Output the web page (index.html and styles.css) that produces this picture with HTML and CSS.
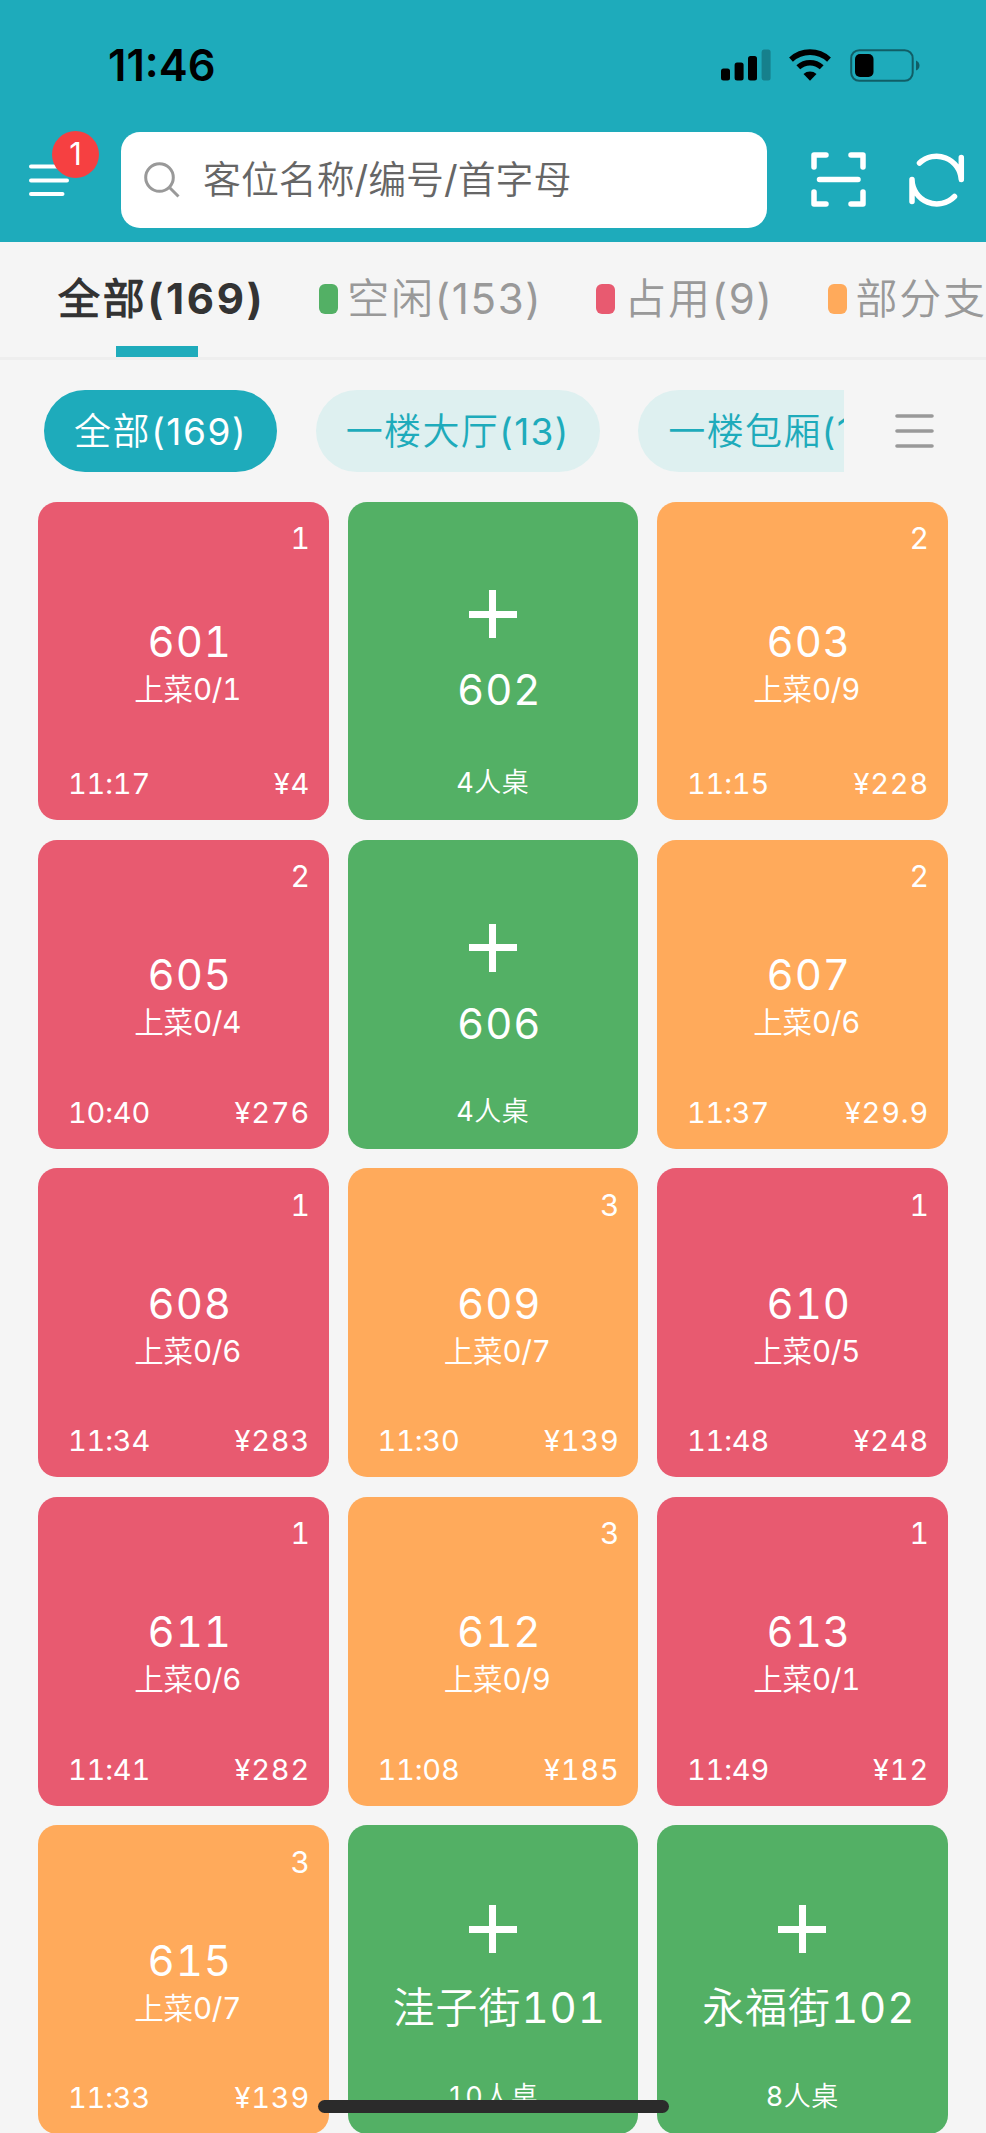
FILE: index.html
```html
<!DOCTYPE html>
<html lang="zh-CN">
<head>
<meta charset="UTF-8" />
<meta name="viewport" content="width=device-width, initial-scale=1" />
<title>客位</title>
<link rel="stylesheet" href="styles.css">
</head>
<body>
<header class="header">
    <div class="status-bar">
        <span class="clock">11:46</span>
        <svg class="status-icons" width="200" height="34" viewBox="0 0 200 34">
            <rect x="0" y="19.5" width="9" height="12" rx="2.5"/>
            <rect x="13.6" y="13.5" width="9" height="18" rx="2.5"/>
            <rect x="27" y="7" width="9" height="24.5" rx="2.5"/>
            <rect x="40.6" y="0.5" width="9" height="31" rx="2.5" opacity="0.25"/>
            <g fill="none" stroke="#000" stroke-width="5.6">
                <path d="M70 10.6a28 28 0 0 1 38 0"/>
                <path d="M77.3 18.3a17.2 17.2 0 0 1 23.4 0"/>
            </g>
            <path d="M82.5 25a10 10 0 0 1 13 0L89 31.8z"/>
            <rect x="130.2" y="1.2" width="61.5" height="30.6" rx="8" fill="none" stroke="#000" stroke-width="2" opacity="0.45"/>
            <rect x="134" y="5" width="18.5" height="23" rx="5"/>
            <path d="M195 11.5q3.5 1.5 3.5 5t-3.5 5z" opacity="0.45"/>
        </svg>
    </div>
    <div class="toolbar">
        <button class="menu-btn" aria-label="菜单">
            <svg width="42" height="34" viewBox="0 0 42 34" fill="none" stroke="#fff" stroke-width="4" stroke-linecap="round">
                <path d="M2 3.5h36M2 17.5h36M2 31h31.500"/>
            </svg>
            <span class="badge">1</span>
        </button>
        <div class="search">
            <svg width="36" height="36" viewBox="0 0 36 36" fill="none" stroke="#999" stroke-width="3">
                <circle cx="15.500" cy="15.500" r="13.8"/>
                <path d="M25.500 25.500l9 9"/>
            </svg>
            <span>客位名称/编号/首字母</span>
        </div>
        <svg class="scan" width="56" height="56" viewBox="0 0 56 56" fill="none" stroke="#fff" stroke-width="5.500" stroke-linecap="round" stroke-linejoin="round">
            <path d="M3 15V3H15M40 3H52V15M52 40V52H40M15 52H3V40M8.500 27.500h38.500"/>
        </svg>
        <svg width="56" height="56" viewBox="0 0 56 56" fill="none" stroke="#fff" stroke-width="5.500" stroke-linecap="round" stroke-linejoin="round">
            <path d="M10.500 11A24.800 24.800 0 0 1 52.300 27.500V5.500"/>
            <path d="M45.500 44.500A24.800 24.800 0 0 1 3 27.500V49.500"/>
        </svg>
    </div>
</header>

<nav class="tabs">
    <div class="tab active">全部(169)</div>
    <div class="tab"><i class="dot free"></i>空闲(153)</div>
    <div class="tab"><i class="dot busy"></i>占用(9)</div>
    <div class="tab"><i class="dot part"></i>部分支</div>
</nav>

<section class="areas">
    <div class="chips">
        <div class="chip active">全部(169)</div>
        <div class="chip">一楼大厅(13)</div>
        <div class="chip">一楼包厢(1</div>
    </div>
    <svg width="40" height="36" viewBox="0 0 40 36" fill="none" stroke="#999" stroke-width="3.600" stroke-linecap="round">
        <path d="M2 3h35M2 18h35M2 33h35"/>
    </svg>
</section>

<main class="tables">
    <div class="card busy">
        <div class="count">1</div>
        <div class="info"><div class="name">601</div><div class="dish">上菜0/1</div></div>
        <div class="foot"><span class="time">11:17</span><span>¥4</span></div>
    </div>
    <div class="card free">
        <div class="info"><i class="plus"></i><div class="name">602</div></div>
        <div class="seats">4人桌</div>
    </div>
    <div class="card part">
        <div class="count">2</div>
        <div class="info"><div class="name">603</div><div class="dish">上菜0/9</div></div>
        <div class="foot"><span class="time">11:15</span><span>¥228</span></div>
    </div>

    <div class="card busy">
        <div class="count">2</div>
        <div class="info"><div class="name">605</div><div class="dish">上菜0/4</div></div>
        <div class="foot"><span class="time">10:40</span><span>¥276</span></div>
    </div>
    <div class="card free">
        <div class="info"><i class="plus"></i><div class="name">606</div></div>
        <div class="seats">4人桌</div>
    </div>
    <div class="card part">
        <div class="count">2</div>
        <div class="info"><div class="name">607</div><div class="dish">上菜0/6</div></div>
        <div class="foot"><span class="time">11:37</span><span>¥29.9</span></div>
    </div>

    <div class="card busy">
        <div class="count">1</div>
        <div class="info"><div class="name">608</div><div class="dish">上菜0/6</div></div>
        <div class="foot"><span class="time">11:34</span><span>¥283</span></div>
    </div>
    <div class="card part">
        <div class="count">3</div>
        <div class="info"><div class="name">609</div><div class="dish">上菜0/7</div></div>
        <div class="foot"><span class="time">11:30</span><span>¥139</span></div>
    </div>
    <div class="card busy">
        <div class="count">1</div>
        <div class="info"><div class="name">610</div><div class="dish">上菜0/5</div></div>
        <div class="foot"><span class="time">11:48</span><span>¥248</span></div>
    </div>

    <div class="card busy">
        <div class="count">1</div>
        <div class="info"><div class="name">611</div><div class="dish">上菜0/6</div></div>
        <div class="foot"><span class="time">11:41</span><span>¥282</span></div>
    </div>
    <div class="card part">
        <div class="count">3</div>
        <div class="info"><div class="name">612</div><div class="dish">上菜0/9</div></div>
        <div class="foot"><span class="time">11:08</span><span>¥185</span></div>
    </div>
    <div class="card busy">
        <div class="count">1</div>
        <div class="info"><div class="name">613</div><div class="dish">上菜0/1</div></div>
        <div class="foot"><span class="time">11:49</span><span>¥12</span></div>
    </div>

    <div class="card part">
        <div class="count">3</div>
        <div class="info"><div class="name">615</div><div class="dish">上菜0/7</div></div>
        <div class="foot"><span class="time">11:33</span><span>¥139</span></div>
    </div>
    <div class="card free long">
        <div class="info"><i class="plus"></i><div class="name">洼子街101</div></div>
        <div class="seats">10人桌</div>
    </div>
    <div class="card free long">
        <div class="info"><i class="plus"></i><div class="name">永福街102</div></div>
        <div class="seats">8人桌</div>
    </div>
</main>
<div class="home-bar"></div>
</body>
</html>
```

FILE: styles.css
```css
* {
    box-sizing: border-box;
}
body {
    margin: 0;
    height: 2133px;
    overflow: hidden;
    position: relative;
    background-color: #f5f5f5;
    font-family: Inter, "Noto Sans CJK SC DemiLight", "Noto Sans CJK SC Light", "Noto Sans CJK SC", sans-serif;
    font-weight: 370;
    color: #fff;
    white-space: nowrap;
}
svg {
    display: block;
    flex: none;
}
.header {
    height: 242px;
    background-color: #1eabbb;
}
.status-bar {
    height: 132px;
    display: flex;
    justify-content: space-between;
    padding: 49px 65px 0 108px;
    color: #000;
}
.clock {
    font-size: 43.5px;
    line-height: 33px;
    font-weight: 600;
}
.toolbar {
    display: flex;
    align-items: center;
    height: 96px;
    padding-left: 29px;
}
.menu-btn {
    position: relative;
    width: 42px;
    padding: 0;
    border: none;
    background: none;
    font-family: inherit;
    cursor: pointer;
}
.badge {
    position: absolute;
    left: 23px;
    top: -32px;
    width: 47px;
    height: 47px;
    border-radius: 50%;
    background-color: #f64041;
    color: #fff;
    font-size: 31px;
    line-height: 45px;
    text-align: center;
}
.search {
    display: flex;
    align-items: center;
    width: 646px;
    height: 96px;
    margin-left: 50px;
    padding-left: 23px;
    border-radius: 19px;
    background-color: #fff;
    color: #666;
    font-size: 37.9px;
}
.search span {
    margin: 0 0 7px 23px;
}
.scan {
    margin: 0 42px 0 43.5px;
}
.tabs {
    display: flex;
    height: 117.5px;
    padding-left: 58px;
    border-bottom: 3px solid #eee;
    overflow: hidden;
    font-size: 42px;
    letter-spacing: 1.7px;
    line-height: 114px;
    color: #999;
}
.tab {
    position: relative;
    display: flex;
    align-items: center;
    flex: none;
    margin-right: 54px;
}
.tab.active {
    color: #333;
    font-weight: 700;
    letter-spacing: 2.7px;
}
.tab.active::after {
    content: "";
    position: absolute;
    left: 58px;
    bottom: 0;
    width: 82px;
    height: 11px;
    background-color: #1eabbb;
}
.dot {
    width: 19px;
    height: 30px;
    margin-right: 9px;
    border-radius: 6px;
}
.areas {
    display: flex;
    align-items: center;
    justify-content: space-between;
    height: 142px;
    padding: 0 51px 0 44px;
}
.chips {
    display: flex;
    gap: 38.5px;
    width: 800px;
    overflow: hidden;
}
.chip {
    flex: none;
    height: 82px;
    padding: 1px 30px 0;
    border-radius: 41px;
    background-color: #def0f0;
    color: #1eabbb;
    font-size: 37px;
    letter-spacing: 1.4px;
    line-height: 82px;
}
.chip.active {
    background-color: #1eabbb;
    color: #fff;
    letter-spacing: 1.6px;
}
.tables {
    display: grid;
    grid-template-columns: repeat(3, 290.5px);
    grid-template-rows: 318.5px repeat(4, 309px);
    gap: 19.5px 19px;
    padding-left: 38px;
    font-variant-numeric: tabular-nums;
}
.card {
    position: relative;
    display: flex;
    flex-direction: column;
    justify-content: center;
    border-radius: 19px;
}
.busy {
    background-color: #e85a70;
}
.free {
    background-color: #53b065;
}
.part {
    background-color: #ffaa5b;
}
.count {
    position: absolute;
    top: 18.5px;
    right: 18.5px;
    font-size: 30px;
    line-height: 36px;
}
.info {
    text-align: center;
    padding-top: 4px;
}
.name {
    padding-left: 13px;
    font-size: 42px;
    letter-spacing: 0.9px;
    line-height: 52px;
}
.dish {
    padding-left: 9px;
    font-size: 29.5px;
    letter-spacing: -0.2px;
    line-height: 42px;
}
.plus {
    display: block;
    width: 48px;
    height: 48px;
    margin: 0 auto 26px;
    background:
        linear-gradient(#fff, #fff) center / 48px 7px no-repeat,
        linear-gradient(#fff, #fff) center / 7px 48px no-repeat;
}
.free .info {
    padding: 0 0 15px;
}
.long .info {
    padding-bottom: 20px;
}
.long .plus {
    margin-bottom: 29px;
}
.foot {
    position: absolute;
    left: 30px;
    right: 18.5px;
    bottom: 18px;
    display: flex;
    justify-content: space-between;
    font-size: 29px;
    letter-spacing: 0.8px;
    line-height: 36px;
}
.time {
    letter-spacing: -0.2px;
}
.seats {
    position: absolute;
    left: 0;
    right: 0;
    bottom: 19px;
    font-size: 27px;
    letter-spacing: 0.5px;
    line-height: 36px;
    text-align: center;
}
.home-bar {
    position: absolute;
    left: 318px;
    top: 2100px;
    width: 351px;
    height: 13px;
    border-radius: 7px;
    background-color: #2b2b2b;
}
```
